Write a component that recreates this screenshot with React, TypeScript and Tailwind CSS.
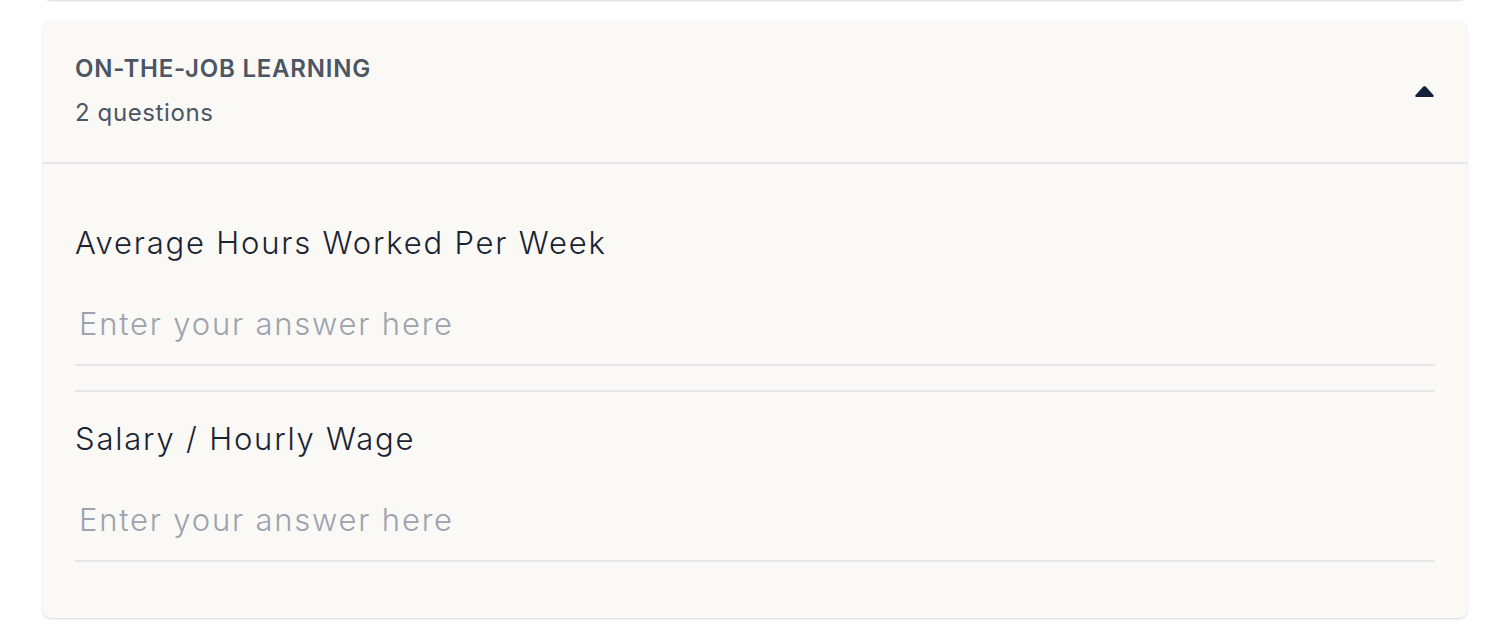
import React from "react";

const font = { fontFamily: "Inter, 'Noto Sans', sans-serif" };

function Question({ label }: { label: string }) {
  return (
    <div className="pt-[27px] pb-[24px]">
      <div className="text-[31px] leading-[40px] text-[#1a2332] font-light tracking-[1.8px]">{label}</div>
      <input
        type="text"
        placeholder="Enter your answer here"
        className="mt-[21px] w-full bg-transparent pl-[4px] pt-[20px] pb-[20px] text-[31px] leading-[40px] font-light tracking-[1.8px] text-[#1a2332] placeholder:text-[#9ca3af] border-b-2 border-[#e5e7eb] outline-none"
        style={font}
      />
    </div>
  );
}

export default function App() {
  return (
    <div className="min-h-[632px] bg-white overflow-hidden pl-[43px] pr-[41px]" style={font}>
      <div className="h-[40px] -mt-[40px] rounded-lg bg-[#faf9f6] shadow-[0_1px_3px_rgba(0,0,0,0.1),0_1px_2px_rgba(0,0,0,0.06)]" />
      <div className="mt-[21px] rounded-lg bg-[#faf9f6] shadow-[0_1px_3px_rgba(0,0,0,0.1),0_1px_2px_rgba(0,0,0,0.06)]">
        <div className="flex items-center justify-between pl-[32px] pr-[33px] h-[143px] border-b-2 border-[#e5e7eb]">
          <div className="-mt-[1px]">
            <div className="text-[24px] leading-[32px] font-semibold text-[#4b5563] tracking-[0.8px]">ON-THE-JOB LEARNING</div>
            <div className="mt-[12px] text-[24px] leading-[32px] font-normal text-[#4b5563] tracking-[0.6px]">2 questions</div>
          </div>
          <svg width="19" height="11" viewBox="0 0 19 11">
            <path d="M8.3 0.6 Q9.5 -0.3 10.7 0.6 L18.6 9.2 Q19.2 11 17.6 11 L1.4 11 Q-0.2 11 0.4 9.2 Z" fill="#13213a" />
          </svg>
        </div>
        <div className="px-[32px] py-[32px] divide-y-2 divide-[#e5e7eb]">
          <Question label="Average Hours Worked Per Week" />
          <Question label="Salary / Hourly Wage" />
        </div>
      </div>
    </div>
  );
}
